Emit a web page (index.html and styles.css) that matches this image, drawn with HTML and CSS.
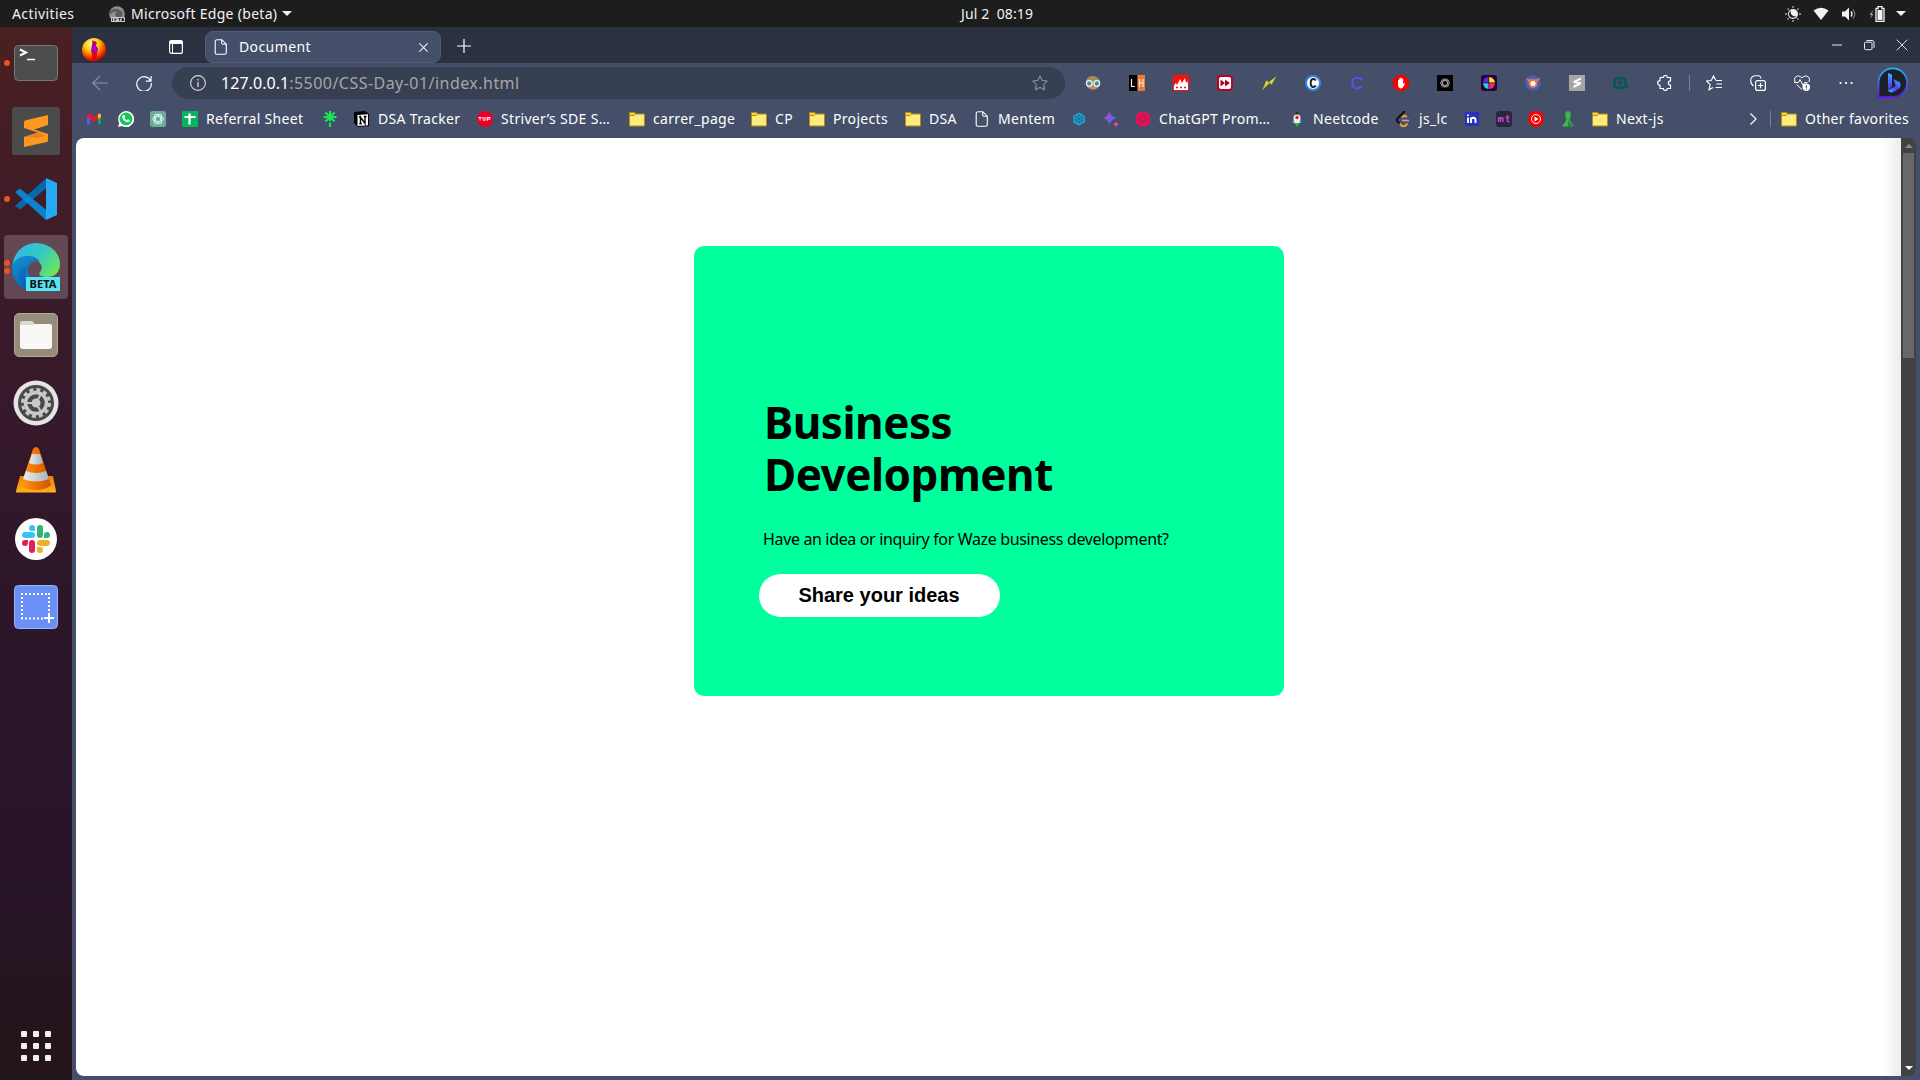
FILE: index.html
```html
<!DOCTYPE html>
<html lang="en">
<head>
<meta charset="utf-8">
<title>Document</title>
<link rel="stylesheet" href="styles.css">
</head>
<body>
<svg class="defs" aria-hidden="true">
  <defs>
    <linearGradient id="edgeGreen" x1="0" y1="0.2" x2="1" y2="0.8"><stop offset="0" stop-color="#2fb7ef"/><stop offset=".5" stop-color="#35c9c0"/><stop offset="1" stop-color="#70ea4c"/></linearGradient>
    <linearGradient id="edgeBlue" x1="0" y1="0" x2=".6" y2="1"><stop offset="0" stop-color="#1391cf"/><stop offset="1" stop-color="#0d62bd"/></linearGradient>
    <linearGradient id="cone" x1="0" y1="0" x2="1" y2="0"><stop offset="0" stop-color="#ff9a1a"/><stop offset=".5" stop-color="#ef7200"/><stop offset="1" stop-color="#c95500"/></linearGradient>
    <linearGradient id="coneBase" x1="0" y1="0" x2="0" y2="1"><stop offset="0" stop-color="#f27a00"/><stop offset="1" stop-color="#ffb21a"/></linearGradient>
    <linearGradient id="coneBand" x1="0" y1="0" x2="1" y2="0"><stop offset="0" stop-color="#e9edf0"/><stop offset="1" stop-color="#a9b1b7"/></linearGradient>
    <radialGradient id="sunset" cx=".4" cy=".25" r=".8"><stop offset="0" stop-color="#fff6a0"/><stop offset=".4" stop-color="#ffc400"/><stop offset=".7" stop-color="#f63d00"/><stop offset="1" stop-color="#5c0500"/></radialGradient>
    <linearGradient id="bingRing" x1="0" y1="0" x2="0" y2="1"><stop offset="0" stop-color="#20b8ef"/><stop offset="1" stop-color="#5a15e8"/></linearGradient>
    <linearGradient id="bingStem" x1="0" y1="0" x2="0" y2="1"><stop offset="0" stop-color="#38b6ff"/><stop offset="1" stop-color="#5a1cf0"/></linearGradient>
    <linearGradient id="bingB" x1="1" y1="0" x2="0" y2="1"><stop offset="0" stop-color="#19dcec"/><stop offset=".5" stop-color="#5a35f5"/><stop offset="1" stop-color="#35c0f5"/></linearGradient>
    <linearGradient id="spark" x1="0" y1="0" x2="1" y2="1"><stop offset="0" stop-color="#f0406f"/><stop offset=".5" stop-color="#735be8"/><stop offset="1" stop-color="#2f9cff"/></linearGradient>
    <symbol id="folder" viewBox="0 0 16 16"><path d="M.5 2.500V1.500h5l1 1.500h9v12H.5z" fill="#fcec7d" stroke="#b08d18"/><path d="M.5 1.500h5l.8 1.300-1.300 1.700H.5z" fill="#f9d83c" stroke="#b08d18"/></symbol>
    <symbol id="page" viewBox="0 0 16 16"><path d="M3.500.700h5.300l4.500 4.500v8.600q0 1.500-1.500 1.500H3.700q-1.500 0-1.500-1.500V2.200q0-1.500 1.500-1.500zM8.700.8v3.300q0 1.200 1.200 1.200h3.300" fill="none" stroke="#fff" stroke-width="1.1"/></symbol>
  </defs>
</svg>

<header class="topbar">
  <span class="activities">Activities</span>
  <span class="appmenu">
    <svg class="i16" viewBox="0 0 16 16"><circle cx="8" cy="8" r="7.800" fill="#8f8f8f"/><path d="M1 5Q5 1 11 4q5 3 1 7H7Q5 7 8 6q-4-2-7 3z" fill="#5d5d5d"/><path d="M2 11h14v5H2z" fill="#c6c6c6"/><path d="M3.500 12.200v2.800M6 12.200v2.800M5.700 13.500h2M9 12.500h3M10.500 13v2M13 15v-2.600h1.600V15" stroke="#333" stroke-width=".9"/></svg>
    <span class="appname">Microsoft Edge (beta)</span>
    <svg class="tri" viewBox="0 0 10 5"><path d="M0 0h10L5 5z" fill="#f2f2f2"/></svg>
  </span>
  <span class="clock">Jul 2&nbsp; 08:19</span>
  <div class="status">
    <svg class="i16" viewBox="0 0 16 16"><path d="M8 0v2M8 14v2M0 8h2M14 8h2M2.500 2.500l1.300 1.300M12.200 12.200l1.300 1.300M2.500 13.500l1.300-1.300M12.200 3.800l1.300-1.300" stroke="#aaa" stroke-width="1.400"/><circle cx="8" cy="8" r="5" fill="#f2f2f2"/><path d="M5.500 4.500Q5 10.500 11.500 10.500 7.500 13 4.800 10.500 2.800 7.500 5.500 4.500z" fill="#1d1d1d"/></svg>
    <svg class="i16" viewBox="0 0 16 16"><path d="M.5 4.500Q8-1 15.500 4.500L8 14z" fill="#f2f2f2"/></svg>
    <svg class="i16" viewBox="0 0 16 16"><path d="M1 5.500h3L8 1.500v13l-4-4H1z" fill="#f2f2f2"/><path d="M10 5.500q2 2.500 0 5" fill="none" stroke="#f2f2f2" stroke-width="1.300"/><path d="M12 3.500q3.500 4.500 0 9" fill="none" stroke="#777" stroke-width="1.300"/></svg>
    <svg class="i16" viewBox="0 0 16 16"><path d="M4 4L.5 9H2.500L1 13l3.500-5H3z" fill="#999"/><path d="M7 2.500h2V.700h4v1.800h2v12.800H7z" fill="none" stroke="#f2f2f2" stroke-width="1.300"/><path d="M8.500 4h5v10h-5z" fill="#f2f2f2"/></svg>
    <svg class="tri" viewBox="0 0 10 5"><path d="M0 0h10L5 5z" fill="#f2f2f2"/></svg>
  </div>
</header>

<div class="desktop">
<nav class="dock">
  <div class="tile"><i class="dot"></i>
    <svg viewBox="0 0 64 64"><rect x="10.500" y="14.500" width="43" height="35" rx="4" fill="#4d4d4d" stroke="#777"/><path d="M16 18.500l6 3-6 3" fill="none" stroke="#fff" stroke-width="2"/><path d="M23 28.500h8" stroke="#fff" stroke-width="1.500"/></svg></div>
  <div class="tile">
    <svg viewBox="0 0 64 64"><rect x="8" y="8" width="48" height="48" rx="3" fill="#4b4b4b"/><path d="M44 16v10l-14 4.500 14 4.500v6.500q0 1-1 1.500L20 48V38l14-4.500L20 29v-6q0-1 1-1.500z" fill="#ff9821"/><path d="M20 38l14-4.500 8 3-8 2.500z" fill="#e8851a"/></svg></div>
  <div class="tile"><i class="dot"></i>
    <svg viewBox="0 0 64 64"><path d="M11 39l5 3.500 27-22-1-9z" fill="#0868ad"/><path d="M11 25l5-3.500 27 22-1 9.500z" fill="#0a84cf"/><path d="M42 11l11 5v32l-11 5z" fill="#27a8f2"/></svg></div>
  <div class="tile active"><i class="dot twin"></i>
    <svg viewBox="0 0 64 64"><path d="M8.500 30C10 17 20 8 32 8c14 0 24 10 24 21 0 9-6 13-13 13-6 0-9-2-7-5q4-5-1-10-5-5-13-4-8 1-13.500 7z" fill="url(#edgeGreen)"/><path d="M8 31C12 20 28 17 36 26c-9-2-14 6-11 14 3 9 11 11 18 11q-4 4-12 5C17 56 7 45 8 31z" fill="url(#edgeBlue)"/><path d="M25 31q-9 12 1 25-12-4-12-16 2-8 11-9z" fill="#0c55a2" opacity=".35"/><rect x="22" y="42" width="34" height="14" fill="#54e5f7"/><text x="39" y="53" text-anchor="middle" font-family="Noto Sans, sans-serif" font-weight="bold" font-size="11" fill="#111" textLength="27" lengthAdjust="spacingAndGlyphs">BETA</text></svg></div>
  <div class="tile">
    <svg viewBox="0 0 64 64"><rect x="10.500" y="10.500" width="43" height="43" rx="4.500" fill="#958d7a" stroke="#b0a997"/><path d="M16 20q0-2 2-2h9q2 0 3 2l1 2h-15z" fill="#dcd9cd"/><path d="M16 22h12q2 0 3-1h15q2 0 2 2v20q0 3-3 3H19q-3 0-3-3z" fill="#f9f8f6"/></svg></div>
  <div class="tile">
    <svg viewBox="0 0 64 64"><circle cx="32" cy="32" r="22.500" fill="#e4e4e4"/><circle cx="32" cy="32" r="18" fill="#494949"/><circle cx="32" cy="32" r="13.500" fill="none" stroke="#c9c9c9" stroke-width="3" stroke-dasharray="4 3.070"/><circle cx="32" cy="32" r="10.500" fill="none" stroke="#c9c9c9" stroke-width="3.500"/><circle cx="32" cy="32" r="4.500" fill="#c9c9c9"/><path d="M32 32h-9M32 32l4.500-8M32 32l4.500 8" stroke="#c9c9c9" stroke-width="2"/></svg></div>
  <div class="tile">
    <svg viewBox="0 0 64 64"><path d="M16 37h33l3 15q0 1.500-1 1.500H12.500q-1 0-.5-1.500z" fill="url(#coneBase)"/><path d="M29 10q3-4 6 0l12 36q-5 5-15 5t-15-5z" fill="url(#cone)"/><path d="M28 15h8l3 9q-7 3-14 0z" fill="url(#coneBand)"/><path d="M22 32q10 4 20 0l3 8q-13 5-26 0z" fill="url(#coneBand)"/></svg></div>
  <div class="tile">
    <svg viewBox="0 0 64 64"><circle cx="32" cy="32" r="21" fill="#fff"/><g stroke-linecap="round" stroke-width="6"><path d="M21 28h7" stroke="#36c5f0"/><path d="M36 21v7" stroke="#2eb67d"/><path d="M36 36h7" stroke="#ecb22e"/><path d="M28 36v7" stroke="#e01e5a"/></g><path d="M31 24h-3a3 3 0 1 1 3-3z" fill="#36c5f0"/><path d="M40 31v-3a3 3 0 1 1 3 3z" fill="#2eb67d"/><path d="M33 40h3a3 3 0 1 1-3 3z" fill="#ecb22e"/><path d="M24 33v3a3 3 0 1 1-3-3z" fill="#e01e5a"/></svg></div>
  <div class="tile">
    <svg viewBox="0 0 64 64"><rect x="10.500" y="10.500" width="43" height="43" rx="4" fill="#6a90f7" stroke="#9bb5fb"/><path d="M17 19h29M17 43.500h24M18 18v26M45 18v19" fill="none" stroke="#fff" stroke-width="2" stroke-dasharray="2 2"/><path d="M45 38v10M40 43h10" stroke="#fff" stroke-width="2"/></svg></div>
  <div class="tile apps"><i></i><i></i><i></i><i></i><i></i><i></i><i></i><i></i><i></i></div>
</nav>

<main class="browser">
  <div class="tabstrip">
    <svg class="avatar" viewBox="0 0 24 24"><circle cx="12" cy="12" r="12" fill="url(#sunset)"/><path d="M10.500 4q1-2 4 .500l-.5 3 2 3-1 5-1 7h-3l-1-6-1-4z" fill="#a900bd"/><path d="M10 14h5l-1 9h-4z" fill="#e5001a"/><path d="M10 2l5 3-3 3z" fill="#c4003f"/></svg>
    <svg class="panel" viewBox="0 0 16 16"><rect x="1.600" y="1.600" width="12.800" height="12.800" rx="2" fill="none" stroke="#fff" stroke-width="1.200"/><path d="M1.600 1.600h12.800V5H1.600z" fill="#fff"/><path d="M4.500 5v9" stroke="#fff"/></svg>
    <div class="tab">
      <svg class="i16" viewBox="0 0 16 16"><use href="#page"/></svg>
      <span class="tabtitle">Document</span>
      <svg class="i8" viewBox="0 0 8 8"><path d="M.3.300l7.400 7.400M7.700.300L.3 7.700" stroke="#eee"/></svg>
    </div>
    <svg class="plus" viewBox="0 0 14 14"><path d="M7 0v14M0 7h14" stroke="#fff" stroke-width="1.200"/></svg>
    <div class="winbtns">
      <svg viewBox="0 0 12 12"><path d="M1 6h10" stroke="#a3a8b2" stroke-width="1.600"/></svg>
      <svg viewBox="0 0 12 12"><rect x="1.500" y="3.200" width="7.500" height="7.500" rx="1" fill="none" stroke="#eee"/><path d="M3.500 1.500H9q2 0 2 2V9" fill="none" stroke="#eee"/></svg>
      <svg viewBox="0 0 12 12"><path d="M.7.700l10.600 10.600M11.300.700L.7 11.300" stroke="#ddd"/></svg>
    </div>
  </div>

  <div class="toolbar">
    <svg class="i16 nav" viewBox="0 0 16 16"><path d="M16 8H.8M8 .8L.8 8 8 15.200" fill="none" stroke="#8c94a8" stroke-width="1.100"/></svg>
    <svg class="i16 nav" viewBox="0 0 16 16"><path d="M14.800 6.200A7.300 7.300 0 1 0 15.300 8M15 1v5.200H9.800" fill="none" stroke="#fff" stroke-width="1.200"/></svg>
    <div class="address">
      <svg class="i16" viewBox="0 0 16 16"><circle cx="8" cy="8" r="7.400" fill="none" stroke="#d5d8df" stroke-width="1.100"/><path d="M8 7v5M8 4v1.500" stroke="#d5d8df" stroke-width="1.300"/></svg>
      <span class="url"><b>127.0.0.1</b>:5500/CSS-Day-01/index.html</span>
      <svg class="i16 star" viewBox="0 0 16 16"><path d="M8 .8l2.200 4.700 5.200.7-3.800 3.500 1 5.200L8 12.400l-4.600 2.500 1-5.200L.6 6.200l5.200-.7z" fill="none" stroke="#9aa0ad"/></svg>
    </div>
    <div class="ext">
      <svg viewBox="0 0 16 16"><ellipse cx="8" cy="8" rx="7" ry="6.800" fill="#c48a66"/><path d="M1 6Q3 .5 8 1t7 5z" fill="#a08c5c"/><circle cx="4.200" cy="8.500" r="2.800" fill="#478aa0" stroke="#e5f4f5" stroke-width="1.300"/><circle cx="11.800" cy="8.500" r="2.800" fill="#478aa0" stroke="#e5f4f5" stroke-width="1.300"/></svg>
      <svg viewBox="0 0 16 16"><path d="M0 0h8.500v16H0z" fill="#000"/><path d="M8.500 0H16v16H8.500z" fill="#e97c3a"/><path d="M2.500 4v7.500H6M10.500 4v8M14 4v8M10.500 8H14" fill="none" stroke="#ffe7d6" stroke-width="1.200"/></svg>
      <svg viewBox="0 0 16 16"><rect width="16" height="16" rx="2" fill="#ff0d0d"/><path d="M1 15q-1-5 2-7l1 2 3-6 2 4 3-5 1 5 1.500-2q1 4 .5 9z" fill="#fff"/><path d="M3 12.500h2M7 12.500h2M11 12.500h2" stroke="#ff0d0d" stroke-width="1.700"/></svg>
      <svg viewBox="0 0 16 16"><rect x="1" y="1" width="14" height="14" rx="3" fill="#fff" stroke="#c1001f" stroke-width="2"/><path d="M3.500 4.500L8 8l-4.500 3.500zM8 4.500L13 8l-5 3.500z" fill="#a60520"/></svg>
      <svg viewBox="0 0 16 16"><path d="M15.500 1L10.500 10 8.800 7.800 1 15.500 5.500 5l2 2.300z" fill="#e0d92c" stroke="#77752c" stroke-width=".5"/></svg>
      <svg viewBox="0 0 16 16"><circle cx="8" cy="8" r="7" fill="#fff" stroke="#2b8af5" stroke-width="2"/><path d="M10.800 5.500Q10 4 8.300 4 5.700 4 5.700 8t2.600 4q1.700 0 2.500-1.500" fill="none" stroke="#222" stroke-width="2"/></svg>
      <svg viewBox="0 0 16 16"><path d="M12.500 5Q11 2.800 8 2.800 3.300 3 3.300 8T8 13.200q3 0 4.500-2.200" fill="none" stroke="#6549ef" stroke-width="2"/><path d="M11.500 3l2 2M11.500 13l2-2" stroke="#6549ef" stroke-width="1.500"/></svg>
      <svg viewBox="0 0 16 16"><path d="M4.700 0h6.600L16 4.700v6.600L11.300 16H4.700L0 11.300V4.700z" fill="#f70000"/><path d="M5 5q.800-.7 1.300 0V3.500q.8-.8 1.300 0V3q.8-.8 1.300 0v1q.8-.8 1.300 0v5l1-1q1 0 .5 1L10 12.500q-1 1-3 1Q5 13 5 10z" fill="#fff"/></svg>
      <svg viewBox="0 0 16 16"><path d="M0 0h16v16H0z" fill="#000"/><g fill="none" stroke="#b5b5b5" stroke-width=".8"><ellipse cx="8" cy="8" rx="4.500" ry="2.400"/><ellipse cx="8" cy="8" rx="4.500" ry="2.400" transform="rotate(60 8 8)"/><ellipse cx="8" cy="8" rx="4.500" ry="2.400" transform="rotate(120 8 8)"/></g></svg>
      <svg viewBox="0 0 16 16"><rect width="16" height="16" rx="3" fill="#250041"/><path d="M7.500 2v5.500H2A6 6 0 0 1 7.500 2z" fill="#6a20f0"/><path d="M8.200 2v5.500H14A6 6 0 0 0 8.200 2z" fill="#ffdf1c"/><path d="M2 8.200h5.500V14A6 6 0 0 1 2 8.200z" fill="#18d7bd"/><path d="M8.200 8.200H14A6 6 0 0 1 8.200 14z" fill="#ff2671"/></svg>
      <svg viewBox="0 0 16 16"><circle cx="8" cy="8" r="7.800" fill="#4260bd"/><path d="M.5 3l5 1.500h5l5-1.500-3.500 4.500H4z" fill="#ef7544"/><circle cx="8" cy="8.500" r="3.500" fill="#fff" stroke="#ef7544" stroke-width="2"/></svg>
      <svg viewBox="0 0 16 16"><path d="M0 0h16v16H0z" fill="#a6a6a6"/><path d="M12 2.500v2.300L7.500 6.500 12 7.200v2L4.500 13v-2.500L8.800 8.800 4.500 8V6z" fill="#fff"/></svg>
      <svg viewBox="0 0 16 16"><rect x="1.300" y="3.300" width="11.400" height="9.400" rx="3" fill="none" stroke="#005b50" stroke-width="2.600"/><circle cx="7" cy="8" r="1.600" fill="none" stroke="#005b50" stroke-width="1.600"/><path d="M13 8.500l3 3.500-4 2z" fill="#005b50"/></svg>
      <svg viewBox="0 0 16 16"><path d="M4 2.500h2.300a2 2 0 0 1 4 0h3.200v3.300a1.500 1.500 0 0 0 0 4.200v3.500h-3.200a2 2 0 0 1-4 0H3V10.300a2.300 2.300 0 0 1 0-4.600V3.500q0-1 1-1z" fill="none" stroke="#fff" stroke-width="1.200"/></svg>
    </div>
    <i class="sep"></i>
    <div class="ext right">
      <svg viewBox="0 0 16 16"><path d="M10 5.500L7.500.900 5.300 5.500.5 6l3.700 3.600-1.200 5.200 4-2.300M10 5.500h6M10.500 9H16M9.500 12.500H16" fill="none" stroke="#fff" stroke-width="1.100"/></svg>
      <svg viewBox="0 0 16 16"><rect x="5.600" y="5.600" width="9.800" height="9.800" rx="2" fill="none" stroke="#fff" stroke-width="1.200"/><path d="M10.500 7.800v5.400M7.800 10.500h5.400" stroke="#fff" stroke-width="1.200"/><path d="M3.500 11Q.5 9 .7 5 1 1.500 5 .8h4q1.500.2 2 2.700" fill="none" stroke="#fff" stroke-width="1.100"/></svg>
      <svg viewBox="0 0 16 16"><path d="M1 7Q-.5 2 3.500 1 6.500.500 8 3q1.500-2.500 4.500-2Q16.500 2 15 7M2.500 9.500L8 14.500M0 7.500h4.500l1.500-3 3 6 1.500-3h3" fill="none" stroke="#fff"/><circle cx="12.300" cy="12.300" r="3.700" fill="#fff"/><path d="M12.300 10v3M12.300 13.600v1" stroke="#454f69"/></svg>
      <svg viewBox="0 0 16 16"><path d="M2.500 8h.1M8 8h.1M13.500 8h.1" stroke="#fff" stroke-width="2.200" stroke-linecap="round"/></svg>
    </div>
    <svg class="bing" viewBox="0 0 32 32"><path d="M1.500 30V16A14.300 14.300 0 1 1 16 30z" fill="#1d2026" stroke="url(#bingRing)" stroke-width="1.800"/><path d="M11 6l4 1.500v12l-4 4z" fill="url(#bingStem)"/><path d="M16.500 12l6.500 3.500q2 5-3 7.500l-5 2.500q-2.500.5-4-2l7.500-4.500z" fill="url(#bingB)"/></svg>
  </div>

  <div class="bookmarks">
    <a><svg viewBox="0 0 16 16"><path d="M1 4h3v9.500H2.300Q1 13.500 1 12.500z" fill="#5b55f5"/><path d="M12 4h3v8.500q0 1-1.300 1H12z" fill="#12a850"/><path d="M1 4q1-2.500 3-1l4 3.200L12 3v4.500l-4 3-4-3L1 6z" fill="#f5122e"/><path d="M12 3q2-1.500 3 1v2l-3 2z" fill="#f8bf16"/></svg></a>
    <a><svg viewBox="0 0 16 16"><path d="M0 16l1.200-4A8 8 0 1 1 4 14.900z" fill="#fff"/><circle cx="8" cy="8" r="6.500" fill="#13c858"/><path d="M5 4l1.500 0 .8 2-.8 1q.8 1.600 2.400 2.300l1-1 2 1q-.2 2-2.300 2Q4.500 10 4.200 6q0-1.300.8-2z" fill="#fff"/></svg></a>
    <a><svg viewBox="0 0 16 16"><rect width="16" height="16" rx="2.500" fill="#67ad99"/><g fill="none" stroke="#e6f5f0" stroke-width=".9"><ellipse cx="8" cy="8" rx="5.300" ry="2.700"/><ellipse cx="8" cy="8" rx="5.300" ry="2.700" transform="rotate(60 8 8)"/><ellipse cx="8" cy="8" rx="5.300" ry="2.700" transform="rotate(120 8 8)"/></g></svg></a>
    <a><svg viewBox="0 0 16 16"><rect width="16" height="16" rx="1" fill="#0cb35d"/><path d="M2.500 6h11M7.500 2.500v11" stroke="#fff" stroke-width="2.200"/></svg><span>Referral Sheet</span></a>
    <a><svg viewBox="0 0 16 16"><path d="M8 0v10M1.500 6h13M3.500 1.500l9 9M12.500 1.500l-9 9M8 11.500V16" stroke="#19e55c" stroke-width="2.100"/></svg></a>
    <a><svg viewBox="0 0 16 16"><path d="M0 1l11-1 4 3v12l-11 1-4-4z" fill="#000"/><path d="M3.500 4l10.500-.7v11L3.500 15z" fill="#fff"/><path d="M6.500 13V6l4.500 6.500V5M5 6h2M5.300 12.700h2.500M9.700 5.500h2.800" stroke="#000" stroke-width="1.400" fill="none"/></svg><span>DSA Tracker</span></a>
    <a><svg viewBox="0 0 16 16"><circle cx="8" cy="8" r="8" fill="#eb0023"/><path d="M1.500 6.500h3M3 6.500v3M6 6v2.500q0 1 1 1t1-1V6M10 10V6.500h3v1.700h-3" fill="none" stroke="#fff"/></svg><span>Striver’s SDE S…</span></a>
    <a><svg><use href="#folder"/></svg><span>carrer_page</span></a>
    <a><svg><use href="#folder"/></svg><span>CP</span></a>
    <a><svg><use href="#folder"/></svg><span>Projects</span></a>
    <a><svg><use href="#folder"/></svg><span>DSA</span></a>
    <a><svg><use href="#page"/></svg><span>Mentem</span></a>
    <a><svg viewBox="0 0 16 16"><path d="M8 1.500l5.800 3.300v6.600L8 14.600l-5.800-3.200V4.800z" fill="#17a8c8"/><path d="M8 4l3.500 2v4L8 12l-3.500-2V6zM8 4v8M4.500 6l7 4M11.500 6l-7 4" fill="none" stroke="#265f98" stroke-width=".8"/></svg></a>
    <a><svg viewBox="0 0 16 16"><path d="M6.500 0q1 5.500 7 7-6 1.500-7 7-1.500-5.500-6.500-7 5-1.500 6.500-7z" fill="url(#spark)"/><path d="M13 10.500q.5 2.200 3 2.700-2.500.5-3 2.800-.5-2.300-3-2.800 2.500-.5 3-2.700z" fill="#ef4ba0"/></svg></a>
    <a><svg viewBox="0 0 16 16"><circle cx="8" cy="8" r="7.500" fill="#f90a59"/><g fill="none" stroke="#9c2456" stroke-width="1.100"><path d="M2.500 6q0 6 5.500 6t5.500-6M4.500 5.500Q5 9.500 8 9.500t3.500-4M5 3h6"/><circle cx="8" cy="5" r="1.500"/></g></svg><span>ChatGPT Prom…</span></a>
    <a><svg viewBox="0 0 16 16"><path d="M4.500 6L8 .5 11.500 6v6h-7z" fill="#eee"/><path d="M5.500 3.500L8 0l2.500 3.500z" fill="#222"/><path d="M4.500 8L3 11.500h2.500zM11.500 8l1.500 3.500h-2.500z" fill="#179bdc"/><circle cx="8" cy="6.500" r="1.700" fill="#e71d2f"/><path d="M5.500 12h5L8 16z" fill="#1ec536"/></svg><span>Neetcode</span></a>
    <a><svg viewBox="0 0 16 16"><path d="M10 0L2.500 7.500q-1.500 1.500 0 3L5 13" fill="none" stroke="#111" stroke-width="2"/><path d="M12 6L9.500 4.500 7 6.500M5 12.500l1.500 2q2 1.500 4 0l2-2" fill="none" stroke="#f6a32a" stroke-width="2"/><path d="M7 9.500h7" stroke="#aaa" stroke-width="1.700"/></svg><span>js_lc</span></a>
    <a><svg viewBox="0 0 16 16"><rect x="1" y="1" width="14" height="14" fill="#2830bd"/><path d="M4 6.500V12M4 3.500v1.600M7 12V6.500M7 9q0-2 2-2.200 2.500 0 2.500 2.200v3" fill="none" stroke="#fff" stroke-width="1.900"/></svg></a>
    <a><svg viewBox="0 0 16 16"><rect width="16" height="16" rx="3" fill="#292638"/><path d="M2.500 11V7q2-1 2 1v3m0-3q2.500-2.500 2.500 0v3M11.500 4v6q.3 1 2 .700M9.500 6.500h4" fill="none" stroke="#c043d6" stroke-width="1.500"/></svg></a>
    <a><svg viewBox="0 0 16 16"><circle cx="8" cy="8" r="8" fill="#f60000"/><circle cx="8" cy="8" r="4.500" fill="none" stroke="#fff"/><path d="M6.500 5.500L10.500 8l-4 2.500z" fill="#fff"/></svg></a>
    <a><svg viewBox="0 0 16 16"><path d="M8 0a3 3 0 0 1 2 5l1.500 1.500h-2Q9.500 10 12 12.500q1.500.5 1.500 3h-11q0-2.500 1.500-3Q6.500 10 6.500 6.500h-2L6 5a3 3 0 0 1 2-5z" fill="#3fb84b"/><path d="M8 9q2 3 4 4l1.500 2.500H8z" fill="#1f8e36"/></svg></a>
    <a><svg><use href="#folder"/></svg><span>Next-js</span></a>
    <a class="more"><svg viewBox="0 0 16 16"><path d="M5.500 2.500L11 8l-5.500 5.500" fill="none" stroke="#fff" stroke-width="1.200"/></svg></a>
    <a><svg><use href="#folder"/></svg><span>Other favorites</span></a>
  </div>

  <div class="viewport">
    <section class="page">
      <article class="card">
        <h1>Business<br>Development</h1>
        <p>Have an idea or inquiry for Waze business development?</p>
        <button>Share your ideas</button>
      </article>
    </section>
    <div class="scrollbar">
      <svg viewBox="0 0 8 4"><path d="M0 4h8L4 0z" fill="#8b8b8b"/></svg>
      <i class="thumb"></i>
      <svg viewBox="0 0 8 4"><path d="M0 0h8L4 4z" fill="#fff"/></svg>
    </div>
  </div>
</main>
</div>
</body>
</html>
```
FILE: styles.css
```css
* { box-sizing: border-box; }
body {
  margin: 0;
  width: 1920px;
  height: 1080px;
  overflow: hidden;
  display: flex;
  flex-direction: column;
  background: #454f69;
  font-family: "Noto Sans", "Open Sans", sans-serif;
  font-size: 14px;
  color: #fff;
}
svg { display: block; flex: none; }
span { white-space: nowrap; }
.defs { width: 0; height: 0; position: absolute; }
.i16 { width: 16px; height: 16px; }
.i8 { width: 9px; height: 9px; }

.topbar {
  height: 27px;
  flex: none;
  display: grid;
  grid-template-columns: 97px 852px 819px 1fr;
  align-items: center;
  padding-left: 12px;
  background: #1d1d1d;
  color: #f2f2f2;
  line-height: 26px;
}
.activities { letter-spacing: 0.4px; }
.appmenu { display: flex; align-items: center; }
.appname { width: 151px; margin-left: 6px; letter-spacing: 0.3px; }
.clock { letter-spacing: 0.1px; }
.tri { width: 10px; height: 5px; }
.status { display: flex; align-items: center; padding-left: 5px; }
.status svg:nth-child(-n+3) { margin-right: 12px; }
.status svg:nth-child(4) { margin-right: 11px; }

.desktop { flex: 1; display: flex; min-height: 0; }
.dock {
  width: 72px;
  display: flex;
  flex-direction: column;
  align-items: center;
  gap: 4px;
  padding-top: 4px;
  background: linear-gradient(#4a2021, #3b1b2a 24%, #2d162a 55%, #28152a 80%, #24151d 94%);
}
.tile { position: relative; width: 64px; height: 64px; flex: none; border-radius: 4px; }
.tile.active { background: rgba(255, 255, 255, 0.2); }
.tile > svg { width: 64px; height: 64px; }
.dot {
  position: absolute;
  left: 0;
  top: 29px;
  width: 6px;
  height: 6px;
  border-radius: 50%;
  background: #e95420;
}
.dot.twin { top: 25px; box-shadow: 0 8px 0 #e95420; }
.apps {
  margin-top: auto;
  margin-bottom: 2px;
  display: grid;
  grid-template-columns: repeat(3, 6px);
  gap: 6px;
  align-content: center;
  justify-content: center;
}
.apps i { width: 6px; height: 6px; border-radius: 1px; background: #f0eeea; }

.browser { flex: 1; display: flex; flex-direction: column; min-width: 0; }
.tabstrip {
  height: 36px;
  flex: none;
  display: flex;
  align-items: center;
  padding-left: 10px;
  background: #2b3140;
}
.avatar { width: 24px; height: 24px; margin-top: 9px; }
.panel { width: 16px; height: 16px; margin-left: 62px; margin-top: 3px; }
.tab {
  width: 236px;
  height: 32px;
  margin: 4px 16px 0 21px;
  padding: 0 12px 0 7px;
  display: flex;
  align-items: center;
  border: 1px solid #505b78;
  border-radius: 8px;
  background: #454f69;
}
.tabtitle { width: 186px; margin: -1px 0 0 10px; letter-spacing: 0.4px; }
.tab .i8 { margin-left: -4px; }
.plus { width: 14px; height: 14px; margin-top: 2px; }
.winbtns { display: flex; gap: 20px; margin-left: auto; margin-right: 12px; }
.winbtns svg { width: 12px; height: 12px; }
.winbtns svg:last-child { margin-left: 1px; }

.toolbar { height: 40px; flex: none; display: flex; align-items: center; padding-left: 20px; }
.nav { margin-right: 28px; }
.nav + .nav { margin-right: 20px; }
.address {
  width: 893px;
  height: 32px;
  display: flex;
  align-items: center;
  padding: 0 17px 0 18px;
  border-radius: 16px;
  background: #373f53;
}
.url { margin-left: 15px; font-size: 16px; letter-spacing: 0.46px; color: #a6a6a9; line-height: 30px; }
.url b { font-weight: 400; color: #fff; letter-spacing: 0.05px; }
.star { margin-left: auto; }
.ext { display: flex; gap: 28px; margin-left: 20px; }
.ext svg { width: 16px; height: 16px; }
.ext.right { margin-left: 16px; }
.sep { width: 1px; height: 16px; margin-left: 16px; background: #77809a; }
.bing { width: 32px; height: 32px; margin-left: 23px; }

.bookmarks {
  height: 35px;
  flex: none;
  display: grid;
  grid-template-columns:
    32px 32px 32px 140px 32px 123px 152px 122px 58px 96px 69px 97px
    32px 32px 154px 106px 69px 32px 32px 32px 32px 153px 36px 1fr;
  align-items: center;
  padding: 0 0 3px 14px;
}
.bookmarks a { display: flex; align-items: center; gap: 8px; line-height: 20px; letter-spacing: 0.32px; }
.bookmarks svg { width: 16px; height: 16px; }
.bookmarks span { margin-top: -1px; }
.more { border-right: 1px solid #77809a; margin-right: 10px; height: 16px; }

.viewport { flex: 1; display: flex; margin: 0 4px 4px; min-height: 0; border-radius: 8px; overflow: hidden; }
.page {
  flex: 1;
  padding: 108px 0 0 618px;
  background: linear-gradient(to right, #fff calc(100% - 18px), #ececec);
}
.card {
  width: 590px;
  height: 450px;
  padding: 150px 65px 0;
  display: flex;
  flex-direction: column;
  align-items: flex-start;
  border-radius: 10px;
  background: #00ff9d;
  color: #000;
}
h1 { margin: 0 0 0 5px; font-size: 44px; line-height: 52px; letter-spacing: -0.5px; }
.card p { margin: 29px 0 0 4px; font-size: 16px; line-height: 20px; letter-spacing: -0.35px; white-space: nowrap; }
button {
  width: 241px;
  height: 43px;
  margin-top: 25px;
  padding: 0 1px 0 0;
  border: 0;
  border-radius: 22px;
  background: #fff;
  color: #000;
  font: bold 20px "Liberation Sans", sans-serif;
}
.scrollbar {
  width: 15px;
  display: flex;
  flex-direction: column;
  align-items: center;
  padding: 6px 0;
  background: #424242;
}
.scrollbar svg { width: 8px; height: 4px; }
.thumb { width: 11px; height: 205px; margin: 5px 0 auto; background: #686868; }
```
